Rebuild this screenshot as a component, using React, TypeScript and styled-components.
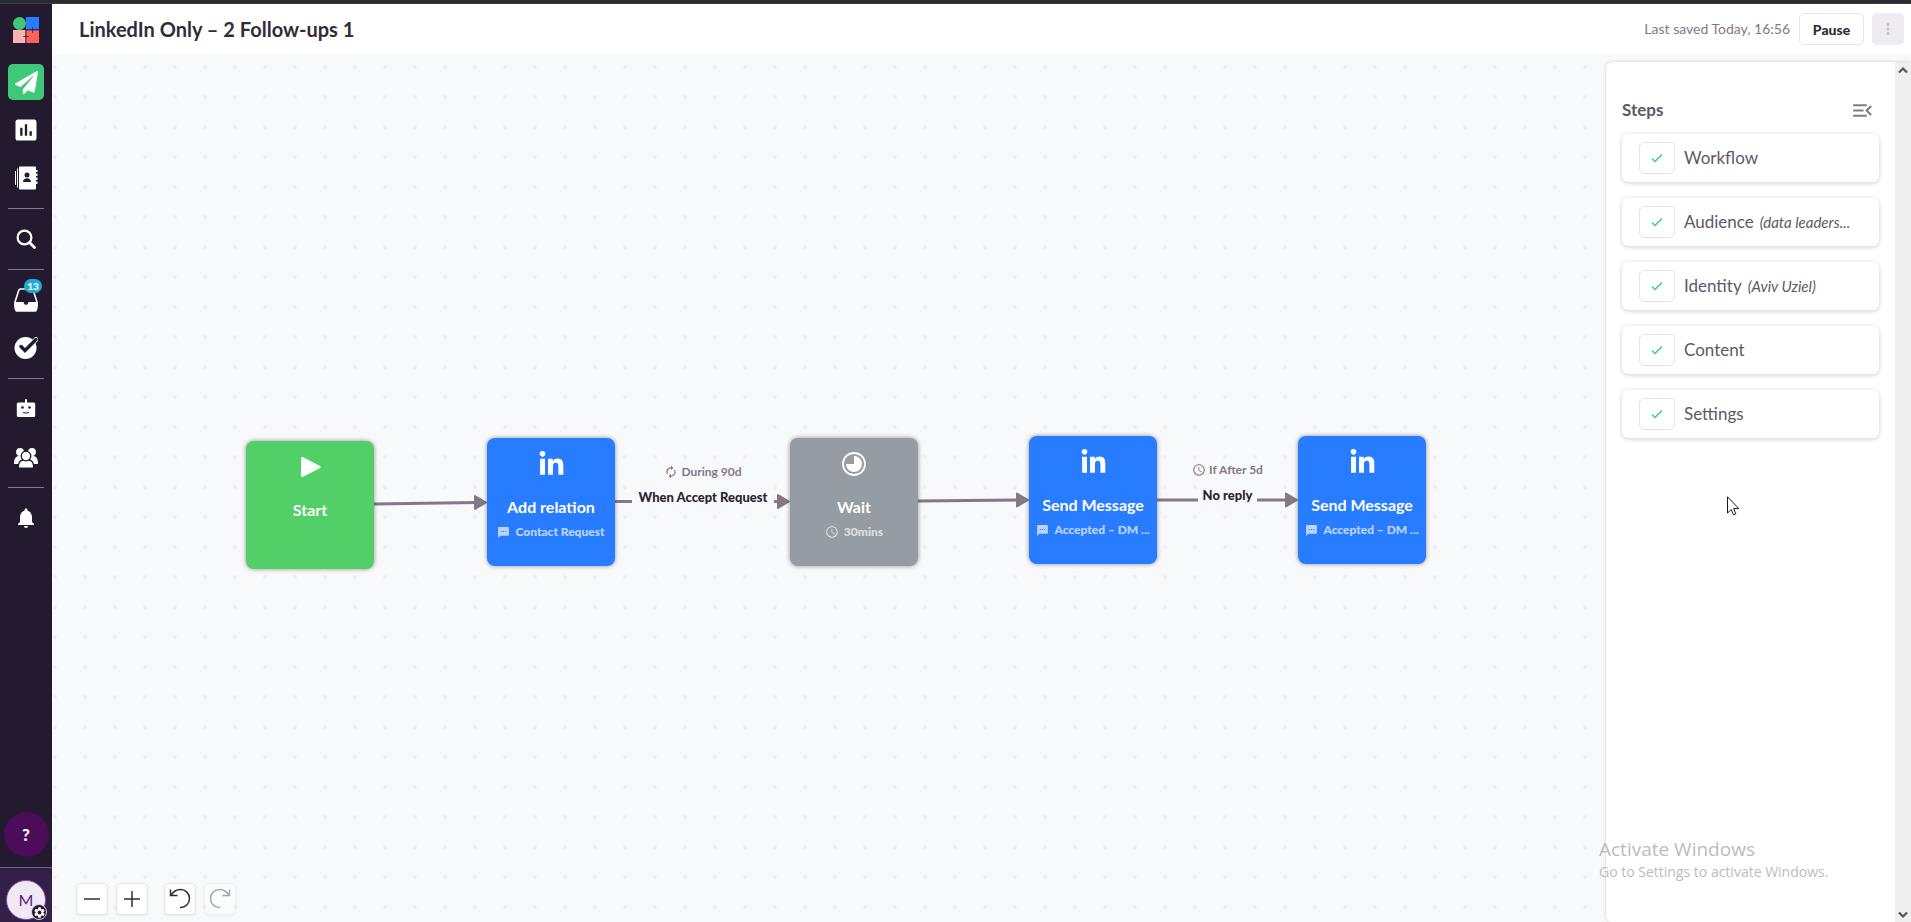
import React from "react";
import styled, { createGlobalStyle, css } from "styled-components";
import { FaLinkedinIn, FaPaperPlane } from "react-icons/fa";
import {
  MdAutorenew,
  MdInsertChart,
  MdMenuOpen,
  MdMoreVert,
  MdNotifications,
  MdSchedule,
  MdSettings,
  MdTextsms,
} from "react-icons/md";

const colors = {
  ink: "#332c38",
  text: "#5f5865",
  muted: "#847886",
  canvas: "#f8f9fb",
  sidebar: "#241a30",
  green: "#52cf66",
  blue: "#287cff",
  gray: "#969da2",
};

const GlobalStyle = createGlobalStyle`
  *, *::before, *::after { box-sizing: border-box; }
  body {
    margin: 0;
    font-family: Lato, "Liberation Sans", sans-serif;
    font-size: 16px;
    line-height: 20px;
    color: ${colors.text};
    overflow: hidden;
  }
  button { font-family: inherit; padding: 0; cursor: pointer; }
  h1, h2, p, ul { margin: 0; padding: 0; }
  svg { display: block; flex: none; }
`;

const Page = styled.div`
  display: flex;
  flex-direction: column;
  height: 100vh;
`;

const WindowEdge = styled.div`
  height: 4px;
  flex: none;
  background: #2a2a31;
  border-bottom: 1px solid #3c3b40;
`;

const Shell = styled.div`
  display: flex;
  flex: 1;
  min-height: 0;
`;

const Sidebar = styled.nav`
  width: 52px;
  flex: none;
  display: flex;
  flex-direction: column;
  align-items: center;
  gap: 12px;
  padding-top: 13px;
  background: ${colors.sidebar};
`;

const LogoLink = styled.a`
  margin-bottom: 9px;
`;

const NavButton = styled.button<{ $active?: boolean }>`
  position: relative;
  width: 36px;
  height: 36px;
  flex: none;
  display: flex;
  align-items: center;
  justify-content: center;
  border: 0;
  border-radius: 5px;
  color: #fff;
  background: ${(p) => (p.$active ? "#3fc87a" : "transparent")};
`;

const NavDivider = styled.hr`
  width: 36px;
  height: 1px;
  flex: none;
  margin: 0;
  border: 0;
  background: #847886;
`;

const Badge = styled.span`
  position: absolute;
  top: -3px;
  right: 2px;
  width: 18px;
  height: 14px;
  border-radius: 7px;
  background: #1fa9d6;
  font-size: 10px;
  line-height: 14px;
  font-weight: 900;
  text-align: center;
`;

const HelpButton = styled.button`
  width: 45px;
  height: 45px;
  flex: none;
  margin-top: auto;
  margin-bottom: -2px;
  border: 0;
  border-radius: 50%;
  background: #4b0c59;
  color: #fff;
  font-size: 17px;
  font-weight: 900;
`;

const Account = styled.div`
  width: 100%;
  height: 55px;
  flex: none;
  display: flex;
  justify-content: center;
  padding-top: 12px;
  border-top: 1px solid #78608e;
  background: #332048;
`;

const Avatar = styled.button`
  position: relative;
  width: 40px;
  height: 40px;
  padding-bottom: 2px;
  border: 1px solid #8c4a98;
  border-radius: 50%;
  background: #f0e8f5;
  color: #5b1a74;
  font-size: 16px;
`;

const Gear = styled.span`
  position: absolute;
  right: -2px;
  bottom: -1px;
  width: 16px;
  height: 16px;
  display: grid;
  place-items: center;
  border: 1px solid #d9cfe2;
  border-radius: 50%;
  background: ${colors.sidebar};
  color: #fff;
`;

const Content = styled.main`
  flex: 1;
  min-width: 0;
  display: flex;
  flex-direction: column;
`;

const Header = styled.header`
  height: 50px;
  flex: none;
  display: flex;
  align-items: center;
  padding: 0 7px 0 27px;
  background: #fff;
`;

const Title = styled.h1`
  flex: 1;
  font-size: 20px;
  line-height: 24px;
  font-weight: 700;
  color: ${colors.ink};
`;

const SavedText = styled.span`
  margin-right: 9px;
  font-size: 14px;
  color: ${colors.muted};
`;

const PauseButton = styled.button`
  width: 65px;
  height: 32px;
  margin-right: 8px;
  border: 1px solid #e7e5ea;
  border-radius: 5px;
  background: #fff;
  color: ${colors.ink};
  font-size: 14px;
  font-weight: 900;
`;

const MoreButton = styled.button`
  width: 32px;
  height: 32px;
  display: grid;
  place-items: center;
  border: 0;
  border-radius: 5px;
  background: #efecf1;
  color: #c3bec7;
`;

const Workspace = styled.div`
  position: relative;
  flex: 1;
  min-height: 0;
  display: flex;
  justify-content: flex-end;
  padding-top: 8px;
  background: ${colors.canvas};
`;

const Canvas = styled.section`
  position: absolute;
  inset: 0;
  overflow: hidden;
`;

const CanvasDrawing = styled.svg`
  position: absolute;
  inset: 0;
  width: 100%;
  height: 100%;
`;

const Node = styled.article<{ $x: number; $y: number; $color: string }>`
  position: absolute;
  left: ${(p) => p.$x}px;
  top: ${(p) => p.$y}px;
  width: 128px;
  height: 128px;
  display: flex;
  flex-direction: column;
  align-items: center;
  padding: 12px 6px 0;
  border-radius: 8px;
  background: ${(p) => p.$color};
  box-shadow: 0 0 4px rgba(40, 30, 45, 0.5);
  color: #fff;
`;

const NodeIcon = styled.span`
  height: 28px;
  display: flex;
  align-items: center;
`;

const NodeTitle = styled.h2`
  margin-top: 19px;
  font-size: 16px;
  line-height: 20px;
  font-weight: 700;
  white-space: nowrap;
`;

const NodeDetail = styled.p`
  display: flex;
  align-items: center;
  gap: 5px;
  margin-top: 7px;
  font-size: 12px;
  line-height: 16px;
  font-weight: 900;
  white-space: nowrap;
  opacity: 0.68;
`;

const EdgeLabel = styled.div<{ $x: number; $y: number; $width: number }>`
  position: absolute;
  left: ${(p) => p.$x}px;
  top: ${(p) => p.$y}px;
  width: ${(p) => p.$width}px;
  display: flex;
  flex-direction: column;
  align-items: center;
  gap: 7px;
  background: ${colors.canvas};
  white-space: nowrap;
`;

const EdgeTiming = styled.span`
  display: flex;
  align-items: center;
  gap: 3px;
  font-size: 12px;
  line-height: 16px;
  font-weight: 700;
  color: ${colors.muted};
`;

const EdgeCondition = styled.span`
  font-size: 13px;
  line-height: 20px;
  font-weight: 900;
  color: #2a2430;
`;

const Toolbar = styled.div`
  position: absolute;
  left: 24px;
  bottom: 7px;
  display: flex;
  gap: 8px;
`;

const ToolButton = styled.button<{ $spaced?: boolean }>`
  width: 32px;
  height: 32px;
  display: grid;
  place-items: center;
  margin-left: ${(p) => (p.$spaced ? 8 : 0)}px;
  border: 1px solid #e5e2e8;
  border-radius: 5px;
  background: #fff;
  color: ${colors.ink};
  box-shadow: 0 1px 2px rgba(50, 40, 60, 0.08);
  &:disabled { opacity: 0.4; }
`;

const Panel = styled.aside`
  position: relative;
  width: 305px;
  display: flex;
  border-radius: 6px 0 0 6px;
  background: #fff;
  box-shadow: 0 0 3px rgba(50, 40, 60, 0.24);
`;

const PanelBody = styled.div`
  flex: 1;
  min-width: 0;
  padding: 38px 16px 0;
`;

const PanelHeader = styled.div`
  display: flex;
  align-items: center;
  justify-content: space-between;
  height: 20px;
  margin-bottom: 14px;
  padding-right: 4px;
`;

const PanelTitle = styled.h2`
  font-size: 17px;
  line-height: 20px;
  font-weight: 700;
`;

const IconButton = styled.button`
  border: 0;
  background: none;
  color: ${colors.muted};
`;

const StepList = styled.ul`
  display: flex;
  flex-direction: column;
  gap: 16px;
  list-style: none;
`;

const Step = styled.li`
  height: 48px;
  display: flex;
  align-items: center;
  padding: 0 16px 0 17px;
  border-radius: 6px;
  background: #fff;
  box-shadow: 0 1px 4px rgba(50, 40, 60, 0.24);
`;

const StepCheck = styled.button`
  width: 36px;
  height: 32px;
  flex: none;
  display: grid;
  place-items: center;
  margin-right: 9px;
  border: 1px solid #e5e2e8;
  border-radius: 5px;
  background: #fff;
  color: #45c97c;
`;

const StepName = styled.span`
  font-size: 17px;
`;

const StepNote = styled.em`
  min-width: 0;
  margin-left: 6px;
  overflow: hidden;
  text-overflow: ellipsis;
  white-space: nowrap;
  font-size: 15px;
`;

const ScrollTrack = styled.div`
  width: 16px;
  flex: none;
  display: flex;
  flex-direction: column;
  justify-content: space-between;
  align-items: center;
  padding: 4px 0 3px;
  background: #efefef;
  color: #55525a;
`;

const Watermark = styled.div`
  position: absolute;
  left: -7px;
  bottom: 40px;
  font-family: "Open Sans", "Noto Sans", sans-serif;
  color: #bcbcbc;
  white-space: nowrap;
  pointer-events: none;
`;

const WatermarkLine = styled.p<{ $large?: boolean }>`
  ${(p) =>
    p.$large
      ? css`
          font-size: 19px;
          line-height: 26px;
        `
      : css`
          font-size: 14px;
          line-height: 20px;
        `}
`;

const Cursor = styled.svg`
  position: absolute;
  left: 121px;
  top: 434px;
`;

const Logo = () => (
  <svg width="26" height="26" viewBox="0 0 26 26">
    <circle cx="6.5" cy="6.5" r="6.5" fill="#3fc87a" />
    <path d="M13 0h13v12.5H13z" fill="#287cff" />
    <path d="M0 13h12.5v13H0z" fill="#ffb3b0" />
    <path d="M13 13h13v13H13z" fill="#ff6259" />
    <path d="M19.5 10v6M13 13h13M13 13v13M10 19.5h6" stroke="#241a30" strokeWidth="0.7" />
  </svg>
);

const ContactsIcon = () => (
  <svg width="24" height="24" viewBox="0 0 24 24" fill="#fff">
    <path d="M5 1.5A1 1 0 0 1 6 .5h15a1 1 0 0 1 1 1V4h1.500v2H22v1.500h1.500v2.500H22v1.500h1.500V14H22v1.500h1.500V18H22v4.500a1 1 0 0 1-1 1H6a1 1 0 0 1-1-1z" />
    <path d="M3 2.500h1v19H3zM1 5h1v14H1z" />
    <circle cx="13" cy="9" r="2.500" fill="#241a30" />
    <path d="M9 16c0-2.600 2-3.800 4-3.800s4 1.200 4 3.800z" fill="#241a30" />
  </svg>
);

const SearchIcon = () => (
  <svg width="20" height="20" viewBox="0 0 20 20" fill="none" stroke="#fff">
    <circle cx="8.500" cy="8.500" r="6.900" strokeWidth="2.200" />
    <path d="m13.500 13.500 5 5" strokeWidth="2.800" strokeLinecap="round" />
  </svg>
);

const InboxIcon = () => (
  <svg width="24" height="24" viewBox="0 0 24 24">
    <path d="M1 14 4.700 2.500Q5.200 1 6.500 1h11q1.300 0 1.800 1.500L23 14" fill="none" stroke="#fff" strokeWidth="1.600" />
    <path d="M0 14h9c.6 0 .8.500 1 1.200.3 1 1 1.600 2 1.600s1.700-.6 2-1.600c.2-.7.400-1.200 1-1.200h9c0 3.500-.2 6-.8 7.800-.4 1.500-1.200 2-2.700 2h-17c-1.500 0-2.300-.5-2.700-2C.2 20 0 17.500 0 14z" fill="#fff" />
  </svg>
);

const TaskIcon = () => (
  <svg width="24" height="24" viewBox="0 0 24 24">
    <circle cx="11.500" cy="12" r="11" fill="#fff" />
    <path d="m7 10.500 4 4L22 3.500" fill="none" stroke="#fff" strokeWidth="4.600" strokeLinecap="round" />
    <path d="m7 10.500 4 4L22 3.500" fill="none" stroke="#241a30" strokeWidth="3.400" strokeLinecap="round" />
  </svg>
);

const RobotIcon = () => (
  <svg width="20" height="20" viewBox="0 0 20 20">
    <path d="M9 1a1 1 0 0 1 2 0v2.500h6.500A1.500 1.500 0 0 1 19.200 5v11.500A1.500 1.500 0 0 1 17.700 18H2.300A1.500 1.500 0 0 1 .8 16.500V5a1.500 1.500 0 0 1 1.500-1.500H9z" fill="#fff" />
    <circle cx="6.500" cy="8.500" r="1.300" fill="#241a30" />
    <circle cx="13.500" cy="8.500" r="1.300" fill="#241a30" />
    <path d="M7 13.500q3 1.200 6 0" fill="none" stroke="#241a30" strokeWidth="1" />
  </svg>
);

const PeopleIcon = () => (
  <svg width="24" height="22" viewBox="0 -2 24 22" fill="#fff">
    <circle cx="6" cy="4" r="3.900" />
    <circle cx="18" cy="4" r="3.900" />
    <path d="M0 16c0-4 1-8 5-8h14c4 0 5 4 5 8z" />
    <path d="M4.300 20.200c0-5 2-8.200 5-8.200h5.400c3 0 5 3.200 5 8.200z" stroke="#241a30" strokeWidth="1.300" />
    <circle cx="12" cy="8" r="4.800" stroke="#241a30" strokeWidth="1.300" />
  </svg>
);

const PlayIcon = () => (
  <svg width="22" height="22" viewBox="0 0 22 22">
    <path d="M3.500 2.500 20 11 3.500 19.500z" fill="#fff" stroke="#fff" strokeWidth="3" strokeLinejoin="round" />
  </svg>
);

const WaitIcon = () => (
  <svg width="24" height="24" viewBox="0 0 24 24">
    <circle cx="12" cy="12" r="11" fill="none" stroke="#fff" strokeWidth="1.800" />
    <path d="M12 4a8 8 0 1 1-8 8h8z" fill="#fff" />
  </svg>
);

const CheckIcon = () => (
  <svg width="12" height="10" viewBox="0 0 12 10">
    <path d="m1 5.500 3 3 7-7" fill="none" stroke="currentColor" strokeWidth="1.500" />
  </svg>
);

const StrokeIcon = ({ d, width = 1.5 }: { d: string; width?: number }) => (
  <svg width="22" height="22" viewBox="0 0 22 22" fill="none" stroke="currentColor" strokeWidth={width}>
    <path d={d} />
  </svg>
);

const Chevron = ({ up }: { up?: boolean }) => (
  <svg width="10" height="8" viewBox="0 0 10 8">
    <path d={up ? "m1 6.500 4-4 4 4" : "m1 1.500 4 4 4-4"} fill="none" stroke="currentColor" strokeWidth="2.200" />
  </svg>
);

const linkedIn = <FaLinkedinIn size={27} />;
const message = <MdTextsms size={13} />;

const nodes = [
  { x: 194, y: 387, color: colors.green, icon: <PlayIcon />, title: "Start" },
  { x: 435, y: 384, color: colors.blue, icon: linkedIn, title: "Add relation", mark: message, detail: "Contact Request" },
  { x: 738, y: 384, color: colors.gray, icon: <WaitIcon />, title: "Wait", mark: <MdSchedule size={14} />, detail: "30mins" },
  { x: 977, y: 382, color: colors.blue, icon: linkedIn, title: "Send Message", mark: message, detail: "Accepted – DM ..." },
  { x: 1246, y: 382, color: colors.blue, icon: linkedIn, title: "Send Message", mark: message, detail: "Accepted – DM ..." },
];

const edges = [
  { from: [322, 450], to: [435, 448.5] },
  { from: [563, 447.5], to: [738, 447.5] },
  { from: [866, 447], to: [977, 446] },
  { from: [1105, 446], to: [1246, 446] },
];

const steps = [
  { name: "Workflow" },
  { name: "Audience", note: "(data leaders..." },
  { name: "Identity", note: "(Aviv Uziel)" },
  { name: "Content" },
  { name: "Settings" },
];

export default function App() {
  return (
    <>
      <GlobalStyle />
      <Page>
        <WindowEdge />
        <Shell>
          <Sidebar aria-label="Main">
            <LogoLink href="#" aria-label="Home"><Logo /></LogoLink>
            <NavButton $active aria-label="Campaigns"><FaPaperPlane size={23} /></NavButton>
            <NavButton aria-label="Reports"><MdInsertChart size={28} /></NavButton>
            <NavButton aria-label="Contacts"><ContactsIcon /></NavButton>
            <NavDivider />
            <NavButton aria-label="Search"><SearchIcon /></NavButton>
            <NavDivider />
            <NavButton aria-label="Inbox"><InboxIcon /><Badge>13</Badge></NavButton>
            <NavButton aria-label="Tasks"><TaskIcon /></NavButton>
            <NavDivider />
            <NavButton aria-label="Automation"><RobotIcon /></NavButton>
            <NavButton aria-label="Team"><PeopleIcon /></NavButton>
            <NavDivider />
            <NavButton aria-label="Notifications"><MdNotifications size={24} /></NavButton>
            <HelpButton aria-label="Help">?</HelpButton>
            <Account>
              <Avatar aria-label="Account">M<Gear><MdSettings size={13} /></Gear></Avatar>
            </Account>
          </Sidebar>
          <Content>
            <Header>
              <Title>LinkedIn Only – 2 Follow-ups 1</Title>
              <SavedText>Last saved Today, 16:56</SavedText>
              <PauseButton>Pause</PauseButton>
              <MoreButton aria-label="More"><MdMoreVert size={18} /></MoreButton>
            </Header>
            <Workspace>
              <Canvas aria-label="Workflow">
                <CanvasDrawing>
                  <defs>
                    <pattern id="dots" x="-12" y="-2" width="30" height="30" patternUnits="userSpaceOnUse">
                      <circle cx="15" cy="15" r="1.500" fill="#f4f4f7" stroke="#ececf0" />
                    </pattern>
                  </defs>
                  <rect width="100%" height="100%" fill="url(#dots)" />
                </CanvasDrawing>
                <CanvasDrawing>
                  {edges.map(({ from, to }) => (
                    <line key={from[0]} x1={from[0]} y1={from[1]} x2={to[0] - 10} y2={to[1]} stroke={colors.muted} strokeWidth="3" />
                  ))}
                </CanvasDrawing>
                <EdgeLabel $x={580} $y={410} $width={142}>
                  <EdgeTiming><MdAutorenew size={14} />During 90d</EdgeTiming>
                  <EdgeCondition>When Accept Request</EdgeCondition>
                </EdgeLabel>
                <EdgeLabel $x={1146} $y={408} $width={59}>
                  <EdgeTiming><MdSchedule size={14} />If After 5d</EdgeTiming>
                  <EdgeCondition>No reply</EdgeCondition>
                </EdgeLabel>
                <CanvasDrawing>
                  {edges.map(({ to: [x, y] }) => (
                    <path
                      key={x}
                      d={`M${x - 12} ${y - 6.5}v13l11-6.500z`}
                      fill={colors.muted}
                      stroke={colors.muted}
                      strokeWidth="2"
                      strokeLinejoin="round"
                    />
                  ))}
                </CanvasDrawing>
                {nodes.map((n) => (
                  <Node key={n.x} $x={n.x} $y={n.y} $color={n.color}>
                    <NodeIcon>{n.icon}</NodeIcon>
                    <NodeTitle>{n.title}</NodeTitle>
                    {n.detail && <NodeDetail>{n.mark}{n.detail}</NodeDetail>}
                  </Node>
                ))}
                <Toolbar>
                  <ToolButton aria-label="Zoom out"><StrokeIcon d="M3 11h16" /></ToolButton>
                  <ToolButton aria-label="Zoom in"><StrokeIcon d="M3 11h16M11 3v16" /></ToolButton>
                  <ToolButton $spaced aria-label="Undo">
                    <StrokeIcon d="M1.500 1.500v6h7M2 7.500C4.500 3 8 1.500 11.500 1.500c5 0 9 4 9 9 0 4.500-3.500 9-9.500 9" />
                  </ToolButton>
                  <ToolButton disabled aria-label="Redo">
                    <StrokeIcon d="M20.500 1.500v6h-7M20 7.500C17.500 3 14 1.500 10.500 1.500c-5 0-9 4-9 9 0 4.500 3.500 9 9.500 9" />
                  </ToolButton>
                </Toolbar>
              </Canvas>
              <Panel>
                <PanelBody>
                  <PanelHeader>
                    <PanelTitle>Steps</PanelTitle>
                    <IconButton aria-label="Collapse steps"><MdMenuOpen size={25} /></IconButton>
                  </PanelHeader>
                  <StepList>
                    {steps.map((s) => (
                      <Step key={s.name}>
                        <StepCheck aria-label={`${s.name} complete`}><CheckIcon /></StepCheck>
                        <StepName>{s.name}</StepName>
                        {s.note && <StepNote>{s.note}</StepNote>}
                      </Step>
                    ))}
                  </StepList>
                </PanelBody>
                <ScrollTrack><Chevron up /><Chevron /></ScrollTrack>
                <Watermark>
                  <WatermarkLine $large>Activate Windows</WatermarkLine>
                  <WatermarkLine>Go to Settings to activate Windows.</WatermarkLine>
                </Watermark>
                <Cursor width="13" height="20" viewBox="0 0 13 20">
                  <path d="M.5.8v16.200l3.700-3.500 2.400 5.300 2.300-1-2.300-5.200h5.200z" fill="#fff" stroke="#1c1726" />
                </Cursor>
              </Panel>
            </Workspace>
          </Content>
        </Shell>
      </Page>
    </>
  );
}
